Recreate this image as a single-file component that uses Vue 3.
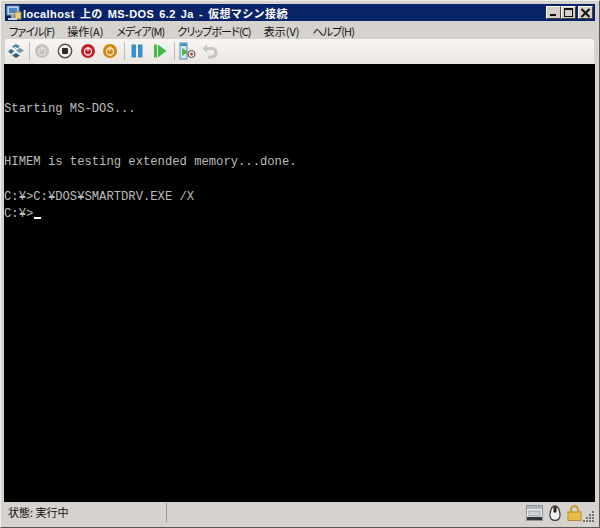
<script setup>
const menus = [
  { label: 'ファイル(F)', kana: true },
  { label: '操作(A)', kana: false },
  { label: 'メディア(M)', kana: true },
  { label: 'クリップボード(C)', kana: true },
  { label: '表示(V)', kana: false },
  { label: 'ヘルプ(H)', kana: true }
]
const rows = ['', '', 'Starting MS-DOS...', '', '', 'HIMEM is testing extended memory...done.', '', 'C:¥>C:¥DOS¥SMARTDRV.EXE /X', 'C:¥>']
</script>

<template>
  <div class="window">
    <header class="titlebar">
      <svg class="app-icon" width="16" height="16" viewBox="0 0 16 16">
        <rect x="1" y="1" width="12" height="9" fill="#b9cfe8" stroke="#6d8db5" />
        <rect x="3" y="3" width="8" height="5" fill="#4d86c8" />
        <rect x="5" y="10" width="4" height="3" fill="#8fa3bb" />
        <rect x="9" y="7" width="6" height="7" fill="#e9d27c" stroke="#a3862f" />
        <rect x="2" y="13" width="9" height="2" fill="#c7d3e0" />
      </svg>
      <span class="title">localhost 上の MS-DOS 6.2 Ja - 仮想マシン接続</span>
      <div class="caption-buttons">
        <button class="cap cap-min"><i></i></button>
        <button class="cap cap-max"><i></i></button>
        <button class="cap cap-close">
          <svg width="11" height="10" viewBox="0 0 11 10"><path d="M1.500 1l8 8M9.500 1l-8 8" stroke="#111" stroke-width="2" /></svg>
        </button>
      </div>
    </header>

    <nav class="menubar">
      <span v-for="m in menus" :key="m.label" class="menu" :class="{ kana: m.kana }">{{ m.label }}</span>
    </nav>

    <div class="toolbar">
      <svg class="tool" width="18" height="18" viewBox="0 0 18 18">
        <path d="M9 2l4 2.500-4 2.500-4-2.500z" fill="#4f7f9f" />
        <path d="M4 7l4 2.500-4 2.500-3-2.500z" fill="#3b6d8f" />
        <path d="M13 6l4 2.500-4 2.500-4-2.500z" fill="#6b97b3" />
        <path d="M9 11l4 2.500-4 2.500-4-2.500z" fill="#2f5f80" />
        <path d="M8 5l2 2M6 11l2-2M10 10l2 2" stroke="#e8eef3" stroke-width="1.200" />
      </svg>
      <span class="sep"></span>
      <svg class="tool" width="18" height="18" viewBox="0 0 18 18">
        <circle cx="9" cy="9" r="7" fill="#c4c2c0" />
        <circle cx="9" cy="9.500" r="3.500" fill="none" stroke="#e4e3e1" stroke-width="1.200" />
        <path d="M9 4.500v4.500" stroke="#e4e3e1" stroke-width="1.400" />
      </svg>
      <svg class="tool" width="18" height="18" viewBox="0 0 18 18">
        <circle cx="9" cy="9" r="6.700" fill="#f4f2f0" stroke="#55504e" stroke-width="1.400" />
        <rect x="6" y="6" width="6" height="6" rx="1" fill="#2d2b2a" />
      </svg>
      <svg class="tool" width="18" height="18" viewBox="0 0 18 18">
        <circle cx="9" cy="9" r="7" fill="#bf2429" />
        <circle cx="9" cy="9.500" r="3.500" fill="none" stroke="#f6e3e3" stroke-width="1.300" />
        <path d="M9 5v4" stroke="#f6e3e3" stroke-width="1.400" />
      </svg>
      <svg class="tool" width="18" height="18" viewBox="0 0 18 18">
        <circle cx="9" cy="9" r="7" fill="#d08614" />
        <circle cx="9" cy="9.500" r="3.500" fill="none" stroke="#fbeecb" stroke-width="1.300" />
        <path d="M9 4.500v4.500" stroke="#fbeecb" stroke-width="1.400" />
      </svg>
      <span class="sep sep-wide"></span>
      <svg class="tool" width="18" height="18" viewBox="0 0 18 18">
        <rect x="3.500" y="2.500" width="4.500" height="13" fill="#3a8fd0" />
        <rect x="10" y="2.500" width="4.500" height="13" fill="#3a8fd0" />
      </svg>
      <svg class="tool" width="18" height="18" viewBox="0 0 18 18">
        <rect x="3" y="2.500" width="3" height="13" fill="#49b84a" />
        <path d="M7 2.500l8.500 6.500-8.500 6.500z" fill="#49b84a" />
      </svg>
      <span class="sep sep-wide"></span>
      <svg class="tool" width="18" height="18" viewBox="0 0 18 18">
        <rect x="2" y="1" width="7" height="16" fill="#dbeaf2" stroke="#4a8eb0" />
        <rect x="2.500" y="1.500" width="6" height="2.500" fill="#3f88b0" />
        <path d="M4 6l6 4-6 4z" fill="#4bb548" />
        <circle cx="13.500" cy="12" r="3.500" fill="#f2efe9" stroke="#4a4a48" />
        <circle cx="13.500" cy="12" r="1.500" fill="#c9352d" />
      </svg>
      <svg class="tool" width="18" height="18" viewBox="0 0 18 18">
        <path d="M6 2L1.500 6.500 6 11V8h4.500a2.700 2.700 0 0 1 0 5.500H7v3h4a5.500 5.500 0 0 0 0-11.500H6z" fill="#c8c6c3" />
      </svg>
    </div>

    <main class="console">
      <div v-for="(r, i) in rows" :key="i" class="row">{{ r }}<span v-if="i === rows.length - 1" class="cursor"></span></div>
    </main>

    <footer class="statusbar">
      <span class="status">状態: 実行中</span>
      <span class="status-sep"></span>
      <div class="tray">
        <svg width="17" height="16" viewBox="0 0 17 16">
          <rect x="0.500" y="0.500" width="16" height="15" fill="#e9edf0" stroke="#8f959a" />
          <rect x="1" y="1" width="15" height="3" fill="#a9b2ba" />
          <rect x="3" y="6" width="11" height="5" fill="#cdd3d8" stroke="#9aa2a9" />
          <rect x="1" y="12" width="15" height="3" fill="#30363b" />
        </svg>
        <svg width="12" height="16" viewBox="0 0 12 16">
          <path d="M6 1C2.500 1 1.500 5 1 9 .6 13 2.500 15.500 6 15.500s5.400-2.500 5-6.500C10.500 5 9.500 1 6 1z" fill="#f2f2f2" stroke="#444" stroke-width="1.300" />
          <path d="M4.500 1.500v6h3v-6z" fill="#222" />
        </svg>
        <svg width="15" height="16" viewBox="0 0 15 16">
          <path d="M4 7V4.500a3.500 3.500 0 0 1 7 0V7" fill="none" stroke="#c79f2e" stroke-width="2" />
          <rect x="1" y="7" width="13" height="8.500" fill="#e8bd45" stroke="#b98f24" />
        </svg>
        <svg class="grip" width="11" height="12" viewBox="0 0 11 12">
          <g fill="#77736e">
            <rect x="9" y="1" width="2" height="2" />
            <rect x="6" y="4" width="2" height="2" /><rect x="9" y="4" width="2" height="2" />
            <rect x="3" y="7" width="2" height="2" /><rect x="6" y="7" width="2" height="2" /><rect x="9" y="7" width="2" height="2" />
            <rect x="0" y="10" width="2" height="2" /><rect x="3" y="10" width="2" height="2" /><rect x="6" y="10" width="2" height="2" /><rect x="9" y="10" width="2" height="2" />
          </g>
        </svg>
      </div>
    </footer>
  </div>
</template>

<style scoped>
.window {
  width: 600px;
  height: 528px;
  box-sizing: border-box;
  padding: 3px 4px 3px 3px;
  background: #d6d2cd;
  border-top: 1px solid #f0eeea;
  border-left: 1px solid #f0eeea;
  border-right: 1px solid #5a5854;
  border-bottom: 1px solid #5a5854;
  display: flex;
  flex-direction: column;
  overflow: hidden;
  font-family: "Noto Sans CJK JP", "Liberation Sans", sans-serif;
}
.titlebar {
  height: 17px;
  flex: none;
  display: flex;
  align-items: center;
  gap: 1px;
  padding: 0 2px 0 1px;
  margin-left: 1px;
  background: #0a246a;
  color: #fff;
  font-family: "Liberation Sans", "Noto Sans CJK JP", sans-serif;
  font-size: 11px;
  font-weight: 700;
  letter-spacing: 0.400px;
}
.app-icon { flex: none; }
.title { white-space: pre; word-spacing: 1.600px; }
.caption-buttons {
  margin-left: auto;
  display: flex;
}
.cap {
  width: 15px;
  height: 13px;
  padding: 0;
  box-sizing: border-box;
  background: #d4d0c8;
  border: 1px solid;
  border-color: #fff #404040 #404040 #fff;
  display: flex;
  align-items: center;
  justify-content: center;
  position: relative;
}
.cap-close { margin-left: 2px; }
.cap-min i {
  position: absolute;
  left: 3px;
  bottom: 2px;
  width: 6px;
  height: 2px;
  background: #111;
}
.cap-max i {
  width: 9px;
  height: 9px;
  box-sizing: border-box;
  border: 1px solid #111;
  border-top-width: 2px;
}
.menubar {
  height: 17px;
  flex: none;
  display: flex;
  align-items: center;
  gap: 13px;
  padding: 1px 0 0 5px;
  font-size: 11px;
  color: #111;
  font-feature-settings: "palt";
}
.menu { white-space: nowrap; }
.kana { letter-spacing: -0.900px; }
.toolbar {
  height: 25px;
  flex: none;
  display: flex;
  align-items: center;
  gap: 4.800px;
  margin: 0 1px 0 1px;
  padding: 0 0 2px 2px;
  box-sizing: border-box;
  background: linear-gradient(#f8f6f3, #eae6e2);
  border-radius: 3px 3px 0 0;
}
.tool { flex: none; }
.sep {
  width: 1px;
  height: 18px;
  margin: 0 -1.300px;
  background: #bdbab5;
  flex: none;
}
.sep-wide { margin-left: -0.300px; }
.console {
  height: 438px;
  flex: none;
  padding-top: 2px;
  box-sizing: border-box;
  background: #000;
  color: #bdbdbd;
  font-family: "Liberation Mono", monospace;
  font-size: 12.200px;
}
.row {
  height: 17.500px;
  line-height: 17.500px;
  white-space: pre;
  position: relative;
}
.cursor {
  display: inline-block;
  width: 7px;
  height: 2px;
  margin-left: 1px;
  background: #fff;
  vertical-align: -2px;
}
.statusbar {
  height: 21px;
  flex: none;
  display: flex;
  align-items: center;
  font-size: 11px;
  color: #111;
}
.status { width: 162px; padding: 0 0 2px 4px; box-sizing: border-box; }
.status-sep {
  width: 1px;
  height: 19px;
  background: #9c9994;
}
.tray {
  margin-left: auto;
  display: flex;
  align-items: center;
  gap: 6px;
  padding-right: 1px;
}
.grip { margin-left: -5px; margin-top: 6px; }
</style>
